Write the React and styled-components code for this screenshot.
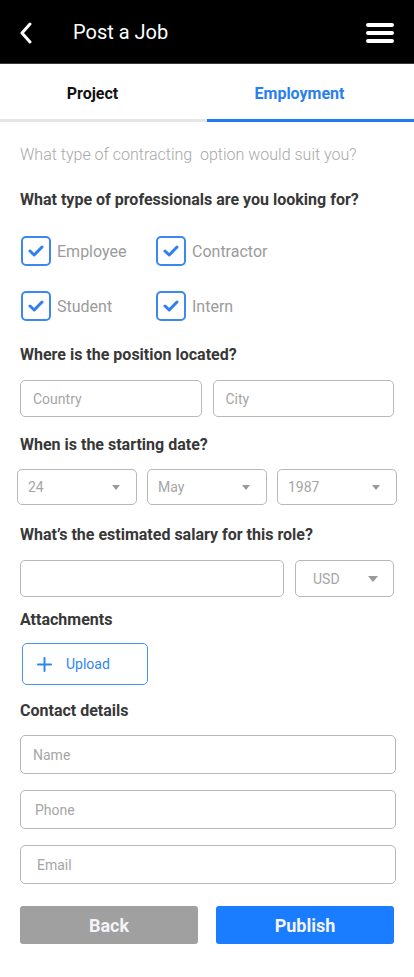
import React, { useState } from 'react';
import styled, { createGlobalStyle, css } from 'styled-components';

const GlobalStyle = createGlobalStyle`
  * { box-sizing: border-box; }
  body {
    margin: 0;
    background: #fff;
    font-family: Roboto, 'Liberation Sans', sans-serif;
  }
`;

const Page = styled.div`
  width: 414px;
  min-height: 977px;
  background: #fff;
`;

const Header = styled.header`
  height: 64px;
  background: #000;
  border-bottom: 1px solid #3a3a3a;
  display: flex;
  align-items: center;
  padding: 0 20px 0 19px;
`;

const BackButton = styled.button`
  border: 0;
  background: transparent;
  padding: 0;
  width: 16px;
  height: 24px;
  display: flex;
  align-items: center;
  margin-top: 2px;
`;

const Title = styled.h1`
  margin: 0 0 0 38px;
  flex: 1;
  font-size: 20px;
  font-weight: 400;
  color: #fff;
`;

const Burger = styled.button`
  border: 0;
  background: transparent;
  padding: 0;
  width: 28px;
  display: flex;
  flex-direction: column;
  gap: 4px;
  margin-top: 2px;

  span {
    display: block;
    height: 4px;
    border-radius: 2px;
    background: #fff;
  }
`;

const Tabs = styled.nav`
  display: flex;
  height: 58px;
`;

const Tab = styled.button`
  flex: 1;
  border: 0;
  background: #fff;
  border-bottom: 3px solid ${({ $active }) => ($active ? '#1f7cf0' : '#e6e6e6')};
  padding: 4px 22px 0 0;
  font-family: inherit;
  font-size: 16px;
  font-weight: 700;
  color: ${({ $active }) => ($active ? '#2a7ff0' : '#111')};
`;

const Form = styled.main`
  padding: 23px 20px 0 20px;
`;

const Subtitle = styled.p`
  margin: 0;
  font-size: 16px;
  line-height: 20px;
  font-weight: 300;
  color: #a8a8a8;
  white-space: pre;
`;

const Heading = styled.h2`
  margin: ${({ $mt }) => $mt}px 0 ${({ $mb }) => $mb}px 0;
  font-size: 16px;
  line-height: 20px;
  font-weight: 700;
  color: #383838;
`;

const CheckGrid = styled.div`
  display: grid;
  grid-template-columns: 135px auto;
  row-gap: 25px;
  padding-left: 1px;
`;

const CheckItem = styled.label`
  display: flex;
  align-items: center;
  gap: 6px;
  height: 30px;
  font-size: 16px;
  color: #9b9b9b;
`;

const Box = styled.span`
  width: 30px;
  height: 30px;
  border: 2px solid #3d87f2;
  border-radius: 5px;
  display: flex;
  align-items: center;
  justify-content: center;
`;

const Row = styled.div`
  display: flex;
  gap: ${({ $gap }) => $gap}px;
  margin: 0 ${({ $mx }) => $mx || 0}px;
`;

const field = css`
  border: 1px solid #b8b8b8;
  border-radius: 5px;
  background: #fff;
  font-family: inherit;
  font-size: 14px;
  color: #555;
`;

const Input = styled.input`
  ${field}
  flex: 1 1 0;
  min-width: 0;
  height: ${({ $h }) => $h || 37}px;
  padding: 0 ${({ $pl }) => $pl || 12}px;
  outline: none;

  &::placeholder {
    color: #a6a6a6;
  }
`;

const Select = styled.div`
  ${field}
  flex: ${({ $w }) => ($w ? `0 0 ${$w}px` : 1)};
  height: ${({ $h }) => $h || 36}px;
  display: flex;
  align-items: center;
  justify-content: space-between;
  padding: 0 ${({ $pr }) => $pr || 16}px 0 ${({ $pl }) => $pl || 10}px;
  color: #a6a6a6;
`;

const Caret = styled.span`
  width: 0;
  height: 0;
  border-left: ${({ $s }) => $s || 4}px solid transparent;
  border-right: ${({ $s }) => $s || 4}px solid transparent;
  border-top: ${({ $s }) => ($s || 4) + 1}px solid #9a9a9a;
`;

const UploadButton = styled.button`
  margin-left: 2px;
  width: 126px;
  height: 42px;
  border: 1px solid #4a93f0;
  border-radius: 5px;
  background: #fff;
  display: flex;
  align-items: center;
  gap: 14px;
  padding: 0 0 0 14px;
  font-family: inherit;
  font-size: 14px;
  color: #2f86f2;
`;

const Stack = styled.div`
  display: flex;
  flex-direction: column;
  gap: 16px;
  margin-right: -2px;

  input {
    flex: none;
  }
`;

const Actions = styled.div`
  display: flex;
  gap: 18px;
  margin: 22px 0 0 0;
`;

const ActionButton = styled.button`
  flex: 1;
  height: 38px;
  border: 0;
  border-radius: 3px;
  background: ${({ $primary }) => ($primary ? '#1a7cff' : '#a0a0a0')};
  color: #f3f3f8;
  font-family: inherit;
  font-size: 18px;
  font-weight: 700;
`;

const Check = () => (
  <svg width="16" height="12" viewBox="0 0 16 12">
    <path d="M2 6 L6.2 10 L14 2" fill="none" stroke="#2f7fef" strokeWidth="3" strokeLinecap="round" strokeLinejoin="round" />
  </svg>
);

const types = ['Employee', 'Contractor', 'Student', 'Intern'];

export default function App() {
  const [tab, setTab] = useState('Employment');

  return (
    <Page>
      <GlobalStyle />
      <Header>
        <BackButton>
          <svg width="14" height="22" viewBox="0 0 14 22">
            <path d="M11 2 L3 11 L11 20" fill="none" stroke="#fff" strokeWidth="3" strokeLinecap="round" strokeLinejoin="round" />
          </svg>
        </BackButton>
        <Title>Post a Job</Title>
        <Burger>
          <span />
          <span />
          <span />
        </Burger>
      </Header>

      <Tabs>
        {['Project', 'Employment'].map((t) => (
          <Tab key={t} $active={tab === t} onClick={() => setTab(t)}>
            {t}
          </Tab>
        ))}
      </Tabs>

      <Form>
        <Subtitle>What type of contracting  option would suit you?</Subtitle>

        <Heading $mt={25} $mb={26}>What type of professionals are you looking for?</Heading>
        <CheckGrid>
          {types.map((t) => (
            <CheckItem key={t}>
              <Box>
                <Check />
              </Box>
              {t}
            </CheckItem>
          ))}
        </CheckGrid>

        <Heading $mt={24} $mb={15}>Where is the position located?</Heading>
        <Row $gap={11}>
          <Input placeholder="Country" />
          <Input placeholder="City" />
        </Row>

        <Heading $mt={18} $mb={14}>When is the starting date?</Heading>
        <Row $gap={10} $mx={-3}>
          <Select>
            24 <Caret />
          </Select>
          <Select>
            May <Caret />
          </Select>
          <Select>
            1987 <Caret />
          </Select>
        </Row>

        <Heading $mt={20} $mb={15}>What’s the estimated salary for this role?</Heading>
        <Row $gap={11}>
          <Input />
          <Select $w={99} $h={37} $pl={17} $pr={15}>
            USD <Caret $s={5} />
          </Select>
        </Row>

        <Heading $mt={13} $mb={13}>Attachments</Heading>
        <UploadButton>
          <svg width="15" height="15" viewBox="0 0 15 15">
            <path d="M7.5 1 V14 M1 7.5 H14" stroke="#2f86f2" strokeWidth="2" strokeLinecap="round" />
          </svg>
          Upload
        </UploadButton>

        <Heading $mt={16} $mb={14}>Contact details</Heading>
        <Stack>
          <Input $h={39} placeholder="Name" />
          <Input $h={39} $pl={14} placeholder="Phone" />
          <Input $h={39} $pl={16} placeholder="Email" />
        </Stack>

        <Actions>
          <ActionButton>Back</ActionButton>
          <ActionButton $primary>Publish</ActionButton>
        </Actions>
      </Form>
    </Page>
  );
}
